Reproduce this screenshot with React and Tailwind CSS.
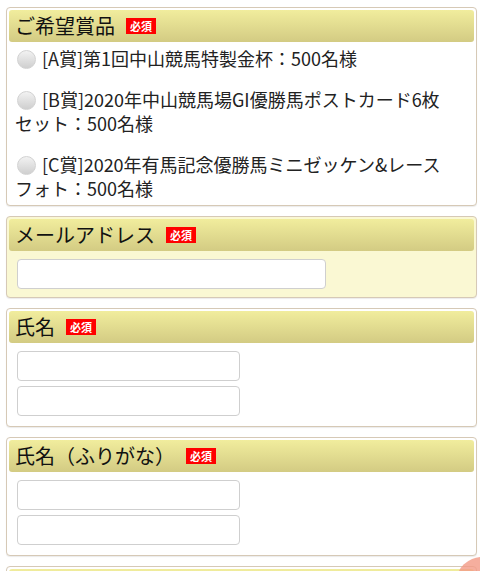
import React from 'react';

const font = { fontFamily: '"Noto Sans CJK JP", "Noto Sans", sans-serif' };

//Red "required" tag next to a section title
function Required() {
    return (
        <span className="ml-[11px] inline-flex h-[16px] w-[30px] items-center justify-center bg-[#ff0000] text-[11px] font-bold leading-none text-white">
            必須
        </span>
    );
}

//Section card with the yellow gradient header
function Section({ title, children, tint }) {
    return (
        <div className={`mb-[10px] ml-[6px] mr-[3px] rounded-[4px] border border-[#d6c9b6] p-[2px] shadow-[0_1px_1px_rgba(0,0,0,0.08)] ${tint ? 'bg-[#faf8d3]' : 'bg-white'}`}>
            <div className="flex h-[32px] items-center rounded-[3px] bg-gradient-to-b from-[#f1ed9d] to-[#d3cb83] pl-[6px] text-[20px] text-[#111]">
                {title && (
                    <>
                        <span>{title}</span>
                        <Required />
                    </>
                )}
            </div>
            {children}
        </div>
    );
}

function TextBox({ wide }) {
    return (
        <input
            type="text"
            className={`block h-[30px] rounded-[4px] border border-[#cfcfcf] bg-white px-2 ${wide ? 'w-[309px]' : 'w-[223px]'}`}
        />
    );
}

function Radio() {
    return (
        <span className="mr-[6px] inline-block h-[19px] w-[19px] translate-y-[3px] rounded-full border border-[#d2d2d2] bg-gradient-to-b from-[#f2f2f2] to-[#cfcfcf] align-baseline" />
    );
}

const prizes = [
    '[A賞]第1回中山競馬特製金杯：500名様',
    '[B賞]2020年中山競馬場GI優勝馬ポストカード6枚セット：500名様',
    '[C賞]2020年有馬記念優勝馬ミニゼッケン&レースフォト：500名様',
];

export default function App() {
    return (
        <div className="relative h-[571px] overflow-hidden bg-white pt-[7px]" style={font}>
            <Section title="ご希望賞品">
                <div className="flex flex-col gap-[17px] pb-[3px] pl-[6px] pr-[20px] pt-[4px] text-[18px] leading-[24px] text-[#222]">
                    {prizes.map((p) => (
                        <label key={p} className="block">
                            <span className="ml-[2px]"><Radio /></span>
                            {p}
                        </label>
                    ))}
                </div>
            </Section>

            <Section title="メールアドレス" tint>
                <div className="pb-[6px] pl-[8px] pt-[8px]">
                    <TextBox wide />
                </div>
            </Section>

            <Section title="氏名">
                <div className="flex flex-col gap-[5px] pb-[8px] pl-[8px] pt-[8px]">
                    <TextBox />
                    <TextBox />
                </div>
            </Section>

            <Section title="氏名（ふりがな）">
                <div className="flex flex-col gap-[5px] pb-[8px] pl-[8px] pt-[8px]">
                    <TextBox />
                    <TextBox />
                </div>
            </Section>

            <Section>
                <div className="h-[40px]" />
            </Section>

            {/* floating page-top button, mostly off screen */}
            <div className="absolute left-[456px] top-[557px] h-[52px] w-[52px] rounded-full bg-[#f39a86] opacity-80" />
        </div>
    );
}
